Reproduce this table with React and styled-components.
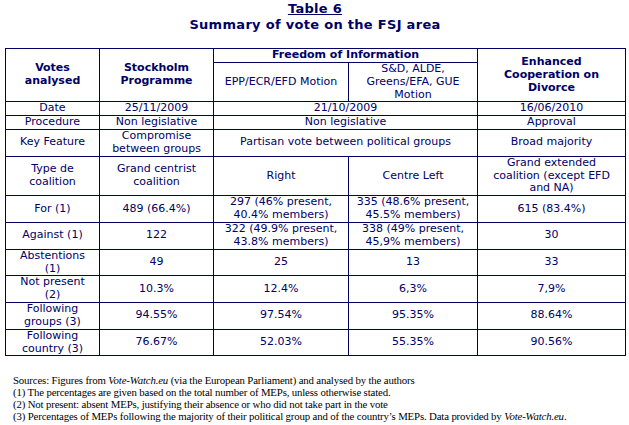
import React from "react";
import styled, { createGlobalStyle } from "styled-components";

const GlobalStyle = createGlobalStyle`
  html, body {
    margin: 0;
    padding: 0;
    background: #ffffff;
  }
`;

const NAVY = "#000066";

const rows = [
  { label: "Date", cells: [["25/11/2009"], ["21/10/2009", 2], ["16/06/2010"]] },
  { label: "Procedure", cells: [["Non legislative"], ["Non legislative", 2], ["Approval"]] },
  {
    label: "Key Feature",
    cells: [["Compromise\nbetween groups"], ["Partisan vote between political groups", 2], ["Broad majority"]],
  },
  {
    label: "Type de\ncoalition",
    cells: [["Grand centrist\ncoalition"], ["Right"], ["Centre Left"], ["Grand extended\ncoalition (except EFD\nand NA)"]],
  },
  {
    label: "For (1)",
    cells: [["489 (66.4%)"], ["297 (46% present,\n40.4% members)"], ["335 (48.6% present,\n45.5% members)"], ["615 (83.4%)"]],
  },
  {
    label: "Against (1)",
    cells: [["122"], ["322 (49.9% present,\n43.8% members)"], ["338 (49% present,\n45,9% members)"], ["30"]],
  },
  { label: "Abstentions\n(1)", cells: [["49"], ["25"], ["13"], ["33"]] },
  { label: "Not present\n(2)", cells: [["10.3%"], ["12.4%"], ["6,3%"], ["7,9%"]] },
  { label: "Following\ngroups (3)", cells: [["94.55%"], ["97.54%"], ["95.35%"], ["88.64%"]] },
  { label: "Following\ncountry (3)", cells: [["76.67%"], ["52.03%"], ["55.35%"], ["90.56%"]] },
];

const notes = [
  <>Sources: Figures from <i>Vote-Watch.eu</i> (via the European Parliament) and analysed by the authors</>,
  <>(1) The percentages are given based on the total number of MEPs, unless otherwise stated.</>,
  <>(2) Not present: absent MEPs, justifying their absence or who did not take part in the vote</>,
  <>(3) Percentages of MEPs following the majority of their political group and of the country’s MEPs. Data provided by <i>Vote-Watch.eu</i>.</>,
];

const Page = styled.div`
  width: 620px;
  padding: 0 0 0 5px;
  font-family: "DejaVu Sans", Verdana, sans-serif;
  color: ${NAVY};
`;

const Title = styled.h1`
  margin: 0;
  padding-top: 1px;
  font-size: 13px;
  line-height: 16px;
  font-weight: bold;
  text-align: center;
  letter-spacing: 0.3px;
`;

const Underlined = styled.span`
  text-decoration: underline;
`;

const Table = styled.table`
  margin-top: 15px;
  width: 621px;
  border-collapse: collapse;
  table-layout: fixed;
  font-size: 11px;
  line-height: 12.85px;
`;

const Cell = styled.td`
  border: 1px solid ${NAVY};
  padding: 0 1px;
  text-align: center;
  vertical-align: middle;
  white-space: pre-line;
  font-weight: ${(p) => (p.$bold ? "bold" : "normal")};
`;

const Notes = styled.div`
  margin-top: 19px;
  padding-left: 8px;
  font-family: "Liberation Serif", "Times New Roman", serif;
  font-size: 10.8px;
  line-height: 11.7px;
  color: #000000;
  letter-spacing: -0.15px;
`;

const Note = styled.div`
  white-space: nowrap;
`;

export default function App() {
  return (
    <Page>
      <GlobalStyle />
      <Title>
        <Underlined>Table 6</Underlined>
        <br />
        Summary of vote on the FSJ area
      </Title>
      <Table>
        <colgroup>
          <col style={{ width: 94 }} />
          <col style={{ width: 114 }} />
          <col style={{ width: 135 }} />
          <col style={{ width: 129 }} />
          <col style={{ width: 148 }} />
        </colgroup>
        <thead>
          <tr>
            <Cell as="th" rowSpan={2} $bold>
              {"Votes\nanalysed"}
            </Cell>
            <Cell as="th" rowSpan={2} $bold>
              {"Stockholm\nProgramme"}
            </Cell>
            <Cell as="th" colSpan={2} $bold>
              Freedom of Information
            </Cell>
            <Cell as="th" rowSpan={2} $bold>
              {"Enhanced\nCooperation on\nDivorce"}
            </Cell>
          </tr>
          <tr>
            <Cell>EPP/ECR/EFD Motion</Cell>
            <Cell>{"S&D, ALDE,\nGreens/EFA, GUE\nMotion"}</Cell>
          </tr>
        </thead>
        <tbody>
          {rows.map((row) => (
            <tr key={row.label}>
              <Cell>{row.label}</Cell>
              {row.cells.map(([text, span], i) => (
                <Cell key={i} colSpan={span || 1}>
                  {text}
                </Cell>
              ))}
            </tr>
          ))}
        </tbody>
      </Table>
      <Notes>
        {notes.map((n, i) => (
          <Note key={i}>{n}</Note>
        ))}
      </Notes>
    </Page>
  );
}
